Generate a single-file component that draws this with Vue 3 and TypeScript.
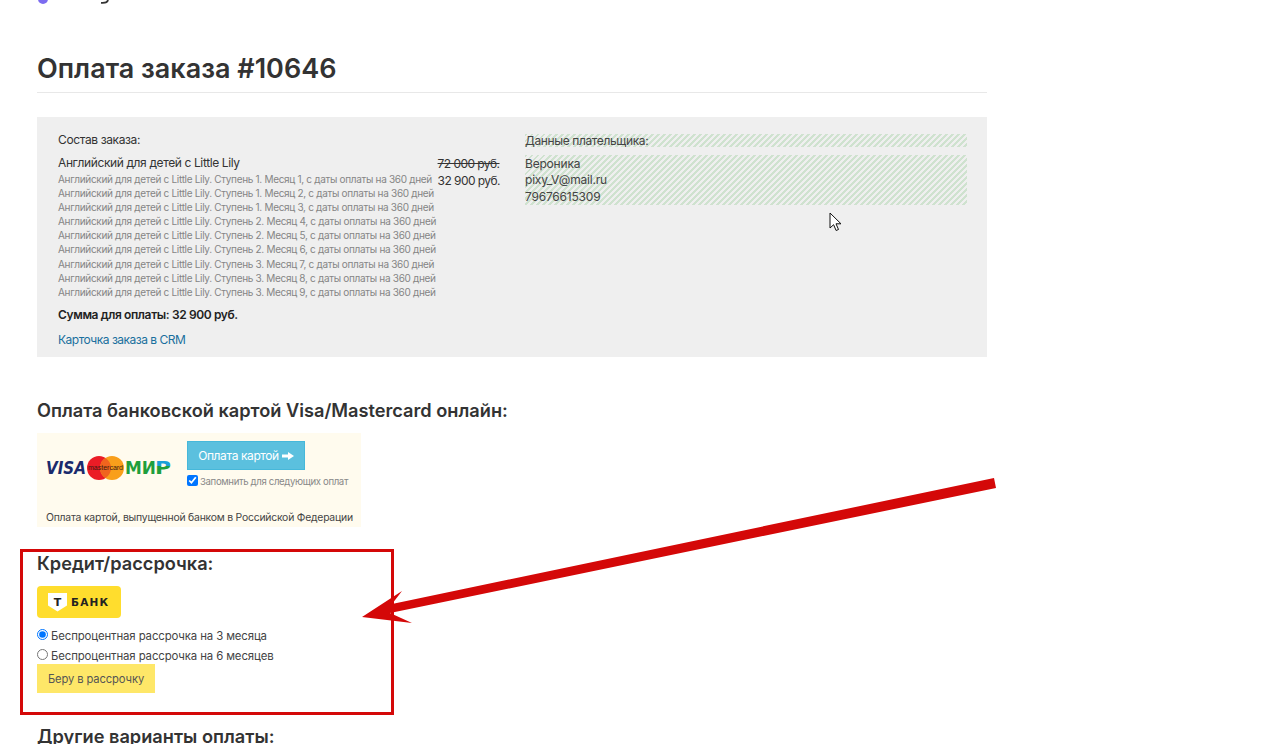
<script setup lang="ts">
const lines: string[] = [
  'Ступень 1. Месяц 1',
  'Ступень 1. Месяц 2',
  'Ступень 1. Месяц 3',
  'Ступень 2. Месяц 4',
  'Ступень 2. Месяц 5',
  'Ступень 2. Месяц 6',
  'Ступень 3. Месяц 7',
  'Ступень 3. Месяц 8',
  'Ступень 3. Месяц 9',
];
</script>

<template>
  <div class="page">
    <div class="top-logo">
      <span class="logo-dot"></span>
      <svg class="logo-tail" width="9" height="4" viewBox="0 0 9 4">
        <path d="M8 0C7.5 2.4 5.5 3.2 1 2.8" fill="none" stroke="#333" stroke-width="1.8" />
      </svg>
    </div>

    <h1 class="title">Оплата заказа #10646</h1>

    <section class="order">
      <div class="order-col order-left">
        <div class="label">Состав заказа:</div>
        <div class="items">
          <div class="item-names">
            <div class="item-main">Английский для детей с Little Lily</div>
            <div v-for="l in lines" :key="l" class="item-sub">
              Английский для детей с Little Lily. {{ l }}, с даты оплаты на 360 дней
            </div>
          </div>
          <div class="item-prices">
            <div class="price-old">72 000 руб.</div>
            <div class="price-new">32 900 руб.</div>
          </div>
        </div>
        <div class="total">Сумма для оплаты: 32 900 руб.</div>
        <a class="crm" href="#">Карточка заказа в CRM</a>
      </div>
      <div class="order-col order-right">
        <div class="label hatch">Данные плательщика:</div>
        <div class="payer hatch">
          <div>Вероника</div>
          <div>pixy_V@mail.ru</div>
          <div>79676615309</div>
        </div>
      </div>
    </section>

    <h2 class="heading first">Оплата банковской картой Visa/Mastercard онлайн:</h2>
    <div class="card-box">
      <div class="card-row">
        <svg class="card-logos" width="126" height="26" viewBox="0 0 126 26">
          <defs>
            <linearGradient id="mir" x1="0" y1="0" x2="0" y2="1">
              <stop offset="0.42" stop-color="#1a9fd8" />
              <stop offset="0.43" stop-color="#1f9e3c" />
            </linearGradient>
          </defs>
          <text x="0" y="19" class="visa" textLength="40" lengthAdjust="spacingAndGlyphs">VISA</text>
          <circle cx="53" cy="13" r="12" fill="#eb1c26" />
          <circle cx="66" cy="13" r="12" fill="#f99f1b" />
          <path d="M59.5 2.9a12 12 0 0 1 0 20.2a12 12 0 0 1 0-20.2z" fill="#f0641e" />
          <text x="59.5" y="15" class="mc">mastercard</text>
          <text x="79" y="19" class="mir-a" textLength="31" lengthAdjust="spacingAndGlyphs">МИ</text>
          <text x="109" y="19" class="mir-b" fill="url(#mir)" textLength="16" lengthAdjust="spacingAndGlyphs">Р</text>
        </svg>
        <div class="card-pay">
          <button class="pay-btn">
            Оплата картой
            <svg width="12" height="10" viewBox="0 0 12 10"><path d="M0 3.5h6V1l6 4-6 4V6.5H0z" fill="#fff" /></svg>
          </button>
          <label class="remember">
            <input type="checkbox" checked />
            <span>Запомнить для следующих оплат</span>
          </label>
        </div>
      </div>
      <div class="card-note">Оплата картой, выпущенной банком в Российской Федерации</div>
    </div>

    <h2 class="heading credit">Кредит/рассрочка:</h2>
    <div class="tbank">
      <span class="shield"><span>Т</span></span>
      <span class="tbank-name">БАНК</span>
    </div>
    <label class="radio"><input type="radio" name="term" checked /><span>Беспроцентная рассрочка на 3 месяца</span></label>
    <label class="radio second"><input type="radio" name="term" /><span>Беспроцентная рассрочка на 6 месяцев</span></label>
    <button class="credit-btn">Беру в рассрочку</button>

    <h2 class="heading other">Другие варианты оплаты:</h2>

    <!-- аннотации поверх скриншота -->
    <div class="frame"></div>
    <svg class="arrow" width="1264" height="744" viewBox="0 0 1264 744">
      <polygon points="994,478 996,488 390,613 412,623 362,617 402,591 392,604" fill="#d40808" />
    </svg>
    <svg class="cursor" width="14" height="20" viewBox="0 0 14 20">
      <path d="M1 1v15l3.6-3.3 2.5 5.8 2.4-1-2.5-5.7h5z" fill="#fff" stroke="#111" stroke-width="1" />
    </svg>
  </div>
</template>

<style scoped>
.page {
  position: relative;
  width: 1264px;
  height: 744px;
  overflow: hidden;
  box-sizing: border-box;
  padding-left: 37px;
  font-family: Inter, "Noto Sans", sans-serif;
  color: #333;
  background: #fff;
}
.top-logo {
  height: 4px;
  overflow: hidden;
  display: flex;
  align-items: flex-end;
}
.logo-dot {
  flex: none;
  width: 10px;
  height: 10px;
  margin-left: 1px;
  border-radius: 50%;
  background: #7c6cf0;
}
.logo-tail {
  flex: none;
  margin-left: 52px;
}
.title {
  width: 950px;
  margin: 0;
  padding: 46px 0 5px;
  box-sizing: border-box;
  height: 89px;
  border-bottom: 1px solid #e8e8e8;
  font-size: 27px;
  line-height: 37px;
  font-weight: 600;
  color: #333;
}
.order {
  display: flex;
  gap: 25px;
  width: 950px;
  height: 240px;
  box-sizing: border-box;
  margin-top: 24px;
  padding: 16px 20px 0 21px;
  background: #efefef;
  font-size: 12px;
  letter-spacing: -0.38px;
}
.order-col {
  width: 442px;
}
.label {
  line-height: 13px;
  color: #333;
}
.items {
  display: flex;
  justify-content: space-between;
  margin-top: 9px;
}
.item-main {
  line-height: 15px;
  margin-bottom: 2px;
}
.item-sub {
  font-size: 10px;
  letter-spacing: -0.31px;
  line-height: 14.1px;
  color: #858585;
  white-space: nowrap;
}
.item-prices {
  line-height: 17px;
  letter-spacing: -0.55px;
  white-space: nowrap;
}
.price-old {
  text-decoration: line-through;
}
.total {
  margin-top: 8px;
  line-height: 15px;
  font-weight: 600;
  color: #222;
}
.crm {
  display: block;
  margin-top: 10px;
  line-height: 15px;
  letter-spacing: -0.5px;
  color: #1a6f9e;
  text-decoration: none;
}
.order-right {
  padding-top: 1px;
}
.hatch {
  background: repeating-linear-gradient(135deg, #cfe2cf 0 2.12px, #efefef 2.12px 4.243px);
  color: #444;
}
.payer {
  margin-top: 8px;
  height: 50px;
  padding-top: 1px;
  box-sizing: border-box;
  line-height: 16.4px;
  letter-spacing: -0.2px;
}
.heading {
  margin: 0;
  font-size: 18.2px;
  line-height: 24px;
  font-weight: 600;
  color: #333;
}
.first {
  margin-top: 41px;
}
.card-box {
  width: 324px;
  height: 94px;
  margin-top: 11px;
  padding: 8px 0 0 9px;
  box-sizing: border-box;
  background: #fffbee;
}
.card-row {
  display: flex;
  gap: 15px;
}
.card-logos {
  margin-top: 14px;
}
.visa {
  font: italic 700 17px "DejaVu Sans", sans-serif;
  fill: #1a2a6c;
}
.mc {
  font: 7px "Liberation Sans", sans-serif;
  fill: #3a1a10;
  text-anchor: middle;
}
.mir-a,
.mir-b {
  font: 700 18px "DejaVu Sans", sans-serif;
}
.mir-a {
  fill: #1f9e3c;
}
.pay-btn {
  display: flex;
  align-items: center;
  justify-content: center;
  gap: 3px;
  width: 118px;
  height: 29px;
  padding: 0;
  border: 1px solid #46b8da;
  background: #5bc0de;
  color: #fff;
  font: 12px Inter, sans-serif;
  letter-spacing: -0.4px;
}
.remember {
  display: flex;
  align-items: center;
  margin-top: 4px;
  font-size: 9.6px;
  letter-spacing: -0.35px;
  color: #888;
}
.remember input {
  width: 11px;
  height: 11px;
  margin: 0 2px 0 0;
}
.remember span {
  padding-top: 2px;
}
.card-note {
  margin-top: 24px;
  font-size: 10.4px;
  letter-spacing: -0.22px;
  line-height: 14px;
  color: #444;
  white-space: nowrap;
}
.credit {
  margin-top: 24px;
}
.tbank {
  display: flex;
  align-items: center;
  width: 84px;
  height: 32px;
  margin-top: 11px;
  padding-left: 11px;
  box-sizing: border-box;
  border-radius: 4px;
  background: #ffdd2d;
}
.shield {
  display: flex;
  align-items: center;
  justify-content: center;
  width: 19px;
  height: 19px;
  background: #fff;
  clip-path: polygon(0 0, 100% 0, 100% 68%, 50% 100%, 0 68%);
  font: 700 11px "DejaVu Sans", sans-serif;
  color: #222;
}
.tbank-name {
  margin-left: 4px;
  font: 700 10.5px "DejaVu Sans", sans-serif;
  letter-spacing: 1.2px;
  color: #222;
}
.radio {
  display: flex;
  align-items: center;
  height: 19px;
  font-size: 11.4px;
  letter-spacing: -0.12px;
  color: #444;
}
.radio input {
  width: 11px;
  height: 11px;
  margin: 0 3px 2px 0;
}
.radio:first-of-type {
  margin-top: 8px;
}
.second {
  margin-top: 1px;
}
.credit-btn {
  display: block;
  width: 118px;
  height: 29px;
  margin-top: -1px;
  padding: 0;
  border: none;
  background: #fee768;
  color: #555;
  font: 11.2px Inter, sans-serif;
  letter-spacing: -0.1px;
}
.other {
  margin-top: 31px;
}
.frame {
  position: absolute;
  left: 20px;
  top: 549px;
  width: 374px;
  height: 166px;
  box-sizing: border-box;
  border: 3px solid #d40808;
}
.arrow {
  position: absolute;
  left: 0;
  top: 0;
  pointer-events: none;
}
.cursor {
  position: absolute;
  left: 829px;
  top: 212px;
}
</style>

<style>
html,
body {
  margin: 0;
  overflow: hidden;
}
</style>
